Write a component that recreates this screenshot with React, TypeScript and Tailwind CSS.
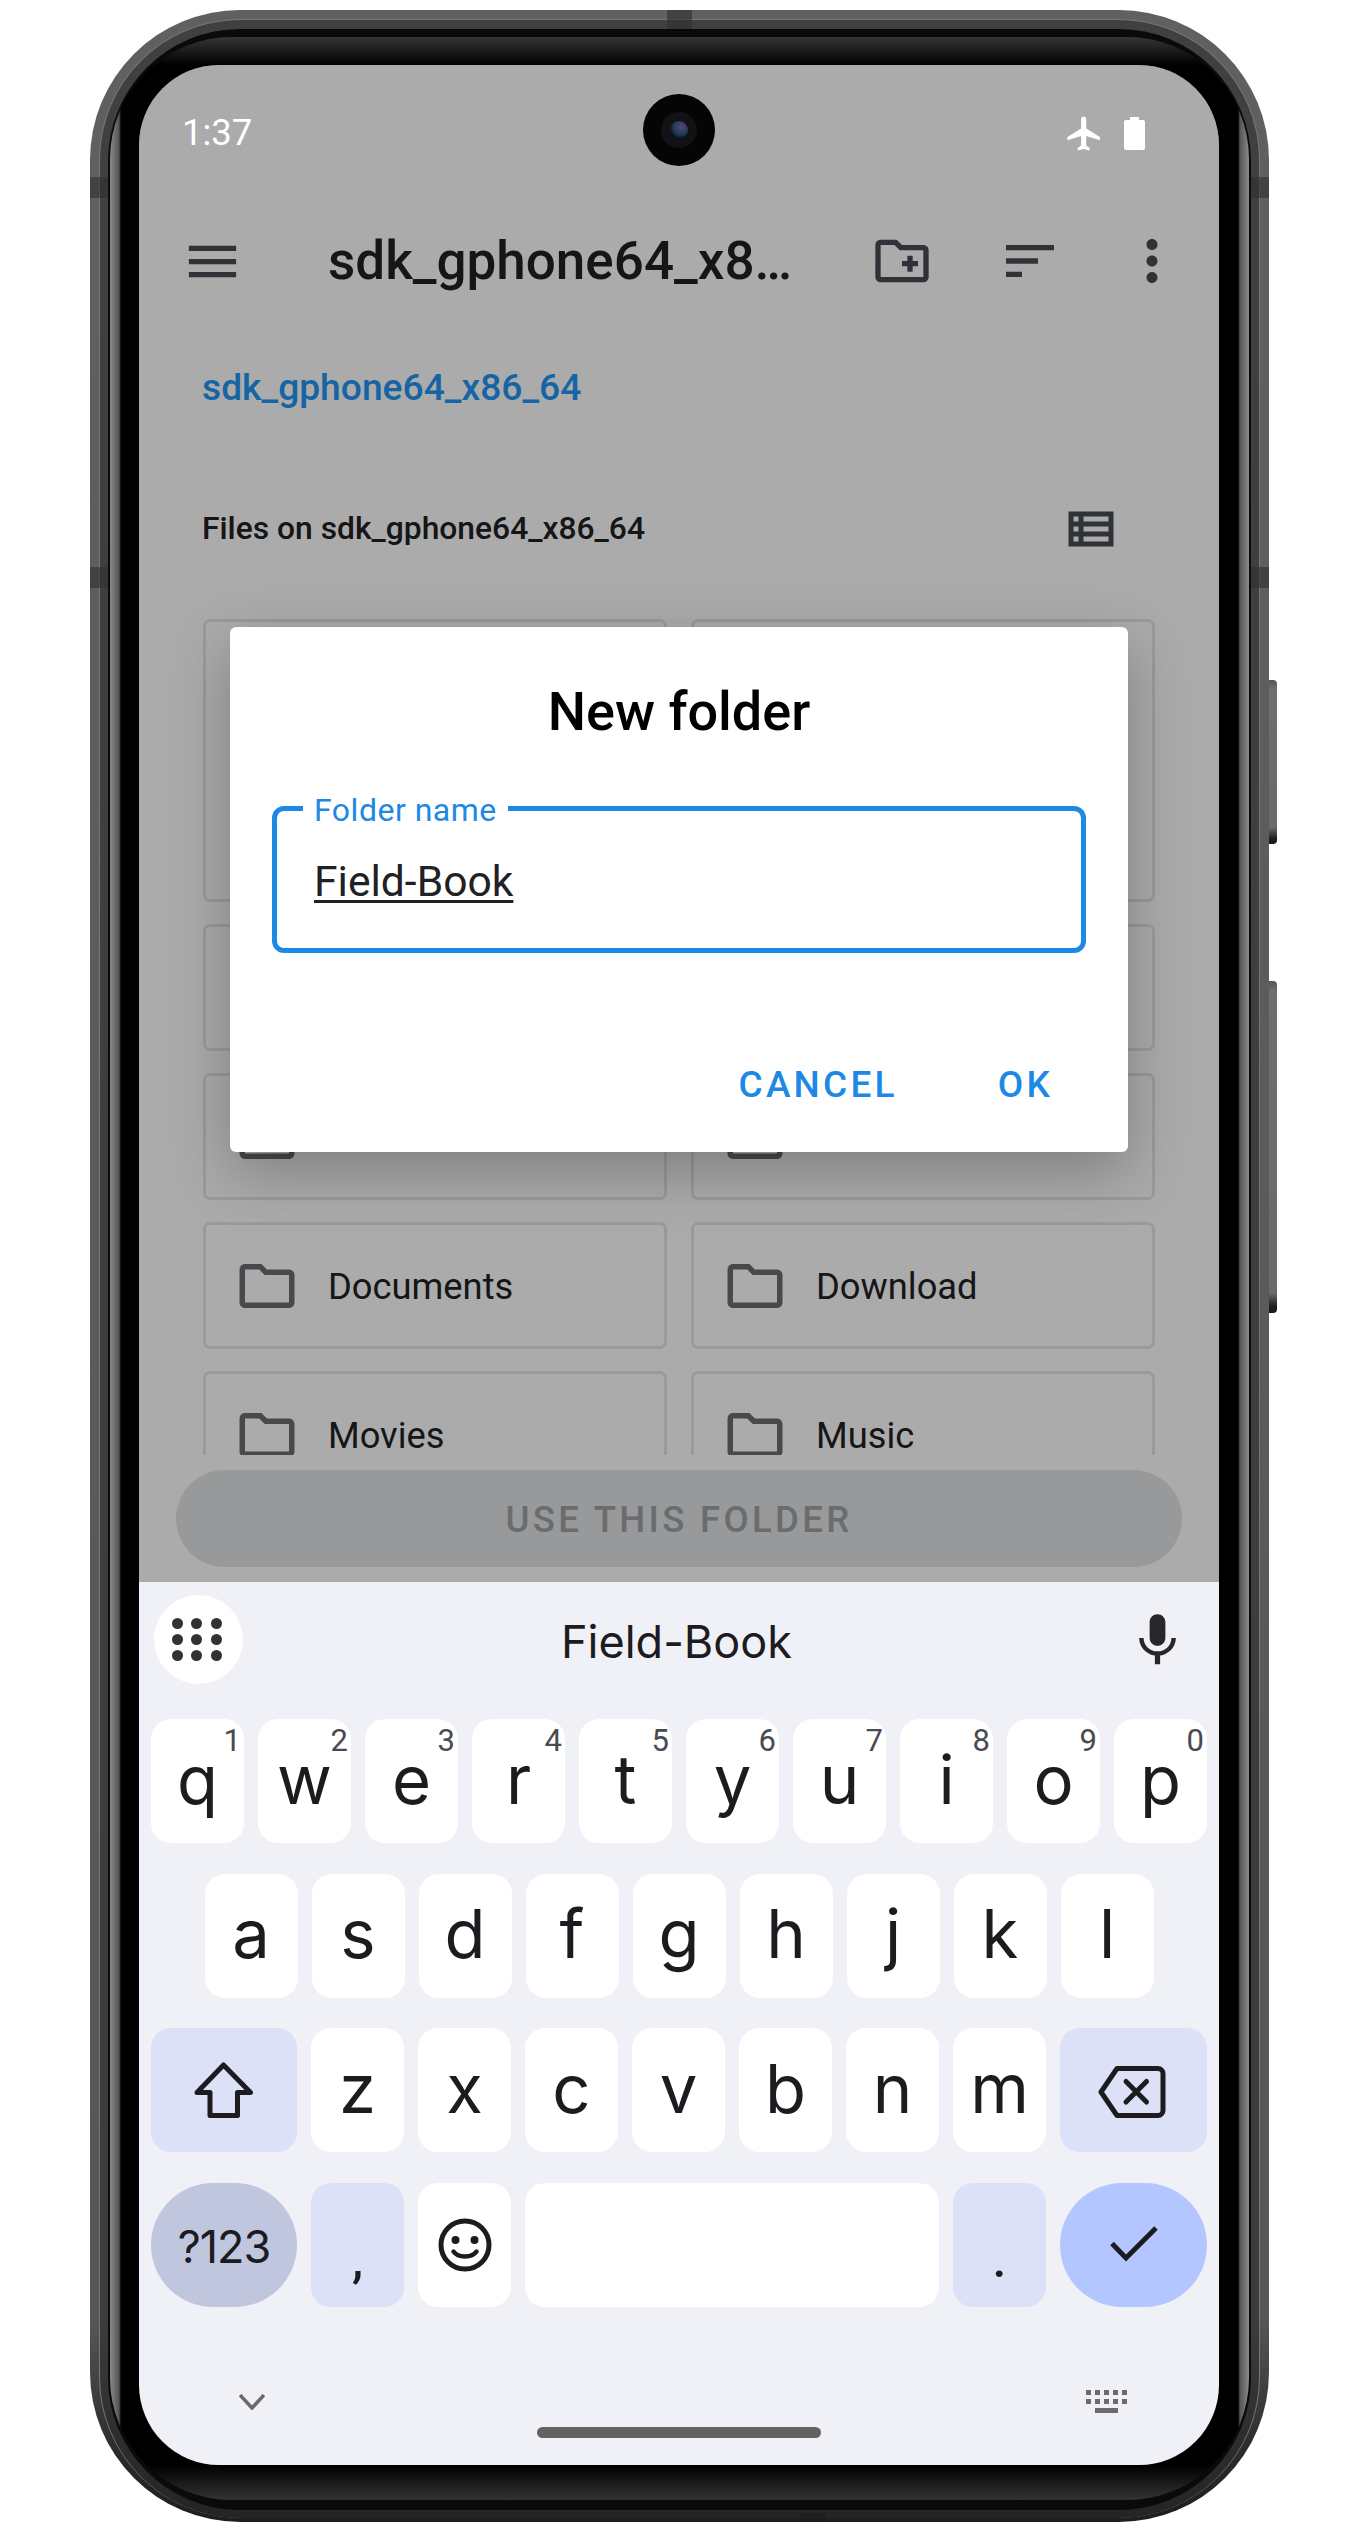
const Icon = ({ d, className }: { d: string; className: string }) => (
  <svg viewBox="0 0 24 24" className={className} fill="currentColor">
    <path d={d} />
  </svg>
);

const FOLDER =
  "M9.17 6l2 2H20v10H4V6h5.17M10 4H4c-1.1 0-1.99.9-1.99 2L2 18c0 1.1.9 2 2 2h16c1.1 0 2-.9 2-2V8c0-1.1-.9-2-2-2h-8l-2-2z";

const row1 = [
  ["q", "1"],
  ["w", "2"],
  ["e", "3"],
  ["r", "4"],
  ["t", "5"],
  ["y", "6"],
  ["u", "7"],
  ["i", "8"],
  ["o", "9"],
  ["p", "0"],
];
const row2 = ["a", "s", "d", "f", "g", "h", "j", "k", "l"];
const row3 = ["z", "x", "c", "v", "b", "n", "m"];

function Key({ label, hint }: { label: string; hint?: string }) {
  return (
    <div className="relative flex h-[124px] w-[93px] items-center justify-center rounded-[20px] bg-white pb-[4px] font-[Inter,sans-serif] text-[67px] leading-none font-normal text-[#1c1b1f]">
      {label}
      {hint && (
        <span className="absolute top-[6px] right-[3px] font-[Roboto,sans-serif] text-[31px] leading-[32px] text-[#49494f]">
          {hint}
        </span>
      )}
    </div>
  );
}

function FolderCard({ name, tall, icon }: { name?: string; tall?: boolean; icon?: boolean }) {
  return (
    <div
      className={`flex items-center rounded-[7px] border-[3px] border-[#e6e6e6] pl-[28px] ${tall ? "h-[283px]" : "h-[127px]"}`}
    >
      {icon && <Icon d={FOLDER} className="h-[66px] w-[66px] shrink-0 text-[#6c6e72]" />}
      {name && (
        <span className="ml-[28px] pt-[3px] font-[Roboto,sans-serif] text-[36.3px] leading-none text-[#202124]">
          {name}
        </span>
      )}
    </div>
  );
}

function Dialog() {
  return (
    <div className="absolute top-[562px] left-[91px] z-20 h-[525px] w-[898px] rounded-[6px] bg-white font-[Roboto,sans-serif] shadow-[0_20px_60px_rgba(0,0,0,0.26)]">
      <div className="pt-[53px] text-center text-[54px] leading-[64px] font-medium text-black">New folder</div>
      <div className="relative mx-[42px] mt-[62px] flex h-[147px] items-center rounded-[12px] border-[5px] border-[#1e88e5] pt-[3px] pl-[37px]">
        <span className="absolute top-[-21px] left-[26px] bg-white px-[11px] text-[32px] leading-[40px] tracking-[0.5px] text-[#1e88e5]">
          Folder name
        </span>
        <span className="text-[42.6px] leading-none text-[#202124] underline decoration-[3px] underline-offset-[4px]">
          Field-Book
        </span>
      </div>
      <div className="mt-[109px] flex justify-end gap-[100px] pr-[75px] text-[37px] leading-[46px] font-medium tracking-[3.2px] text-[#1e88e5]">
        <span>CANCEL</span>
        <span>OK</span>
      </div>
    </div>
  );
}

function AppScreen() {
  return (
    <div className="flex h-[1517px] flex-col bg-white font-[Roboto,sans-serif]">
      <div className="h-[136px]" />
      <div className="flex h-[120px] items-center pl-[42px] text-[#464d52]">
        <Icon d="M3 18h18v-2H3v2zm0-5h18v-2H3v2zm0-7v2h18V6H3z" className="h-[63px] w-[63px] shrink-0" />
        <span className="ml-[84px] w-[541px] shrink-0 text-[53px] leading-none font-medium text-[#202124]">
          sdk_gphone64_x8…
        </span>
        <Icon
          d="M20 6h-8l-2-2H4c-1.11 0-1.99.89-1.99 2L2 18c0 1.11.89 2 2 2h16c1.11 0 2-.89 2-2V8c0-1.11-.89-2-2-2zm0 12H4V6h5.17l2 2H20v10zm-8-4h2v2h2v-2h2v-2h-2v-2h-2v2h-2v2z"
          className="ml-[1px] h-[64px] w-[64px] shrink-0"
        />
        <Icon
          d="M3 18h6v-2H3v2zM3 6v2h18V6H3zm0 7h12v-2H3v2z"
          className="ml-[64px] h-[64px] w-[64px] shrink-0"
        />
        <Icon
          d="M12 8c1.1 0 2-.9 2-2s-.9-2-2-2-2 .9-2 2 .9 2 2 2zm0 2c-1.1 0-2 .9-2 2s.9 2 2 2 2-.9 2-2-.9-2-2-2zm0 6c-1.1 0-2 .9-2 2s.9 2 2 2 2-.9 2-2-.9-2-2-2z"
          className="ml-[57px] h-[66px] w-[66px] shrink-0"
        />
      </div>
      <div className="flex h-[134px] items-center pl-[63px] text-[37.2px] leading-none font-medium text-[#2196f3]">
        sdk_gphone64_x86_64
      </div>
      <div className="flex h-[148px] items-center justify-between pr-[98px] pl-[63px]">
        <span className="text-[31.8px] leading-none font-medium text-[#202124]">Files on sdk_gphone64_x86_64</span>
        <Icon
          d="M3 5v14h18V5H3zm4 2v2H5V7h2zm-2 6v-2h2v2H5zm0 2h2v2H5v-2zm14 2H9v-2h10v2zm0-4H9v-2h10v2zm0-4H9V7h10v2z"
          className="h-[60px] w-[60px] text-[#464d52]"
        />
      </div>
      <div className="min-h-0 flex-1 overflow-hidden pt-[16px]">
        <div className="grid grid-cols-[464px_464px] gap-x-[24px] gap-y-[22px] pl-[64px]">
          <FolderCard tall />
          <FolderCard tall />
          <FolderCard />
          <FolderCard />
          <FolderCard icon />
          <FolderCard icon />
          <FolderCard icon name="Documents" />
          <FolderCard icon name="Download" />
          <FolderCard icon name="Movies" />
          <FolderCard icon name="Music" />
        </div>
      </div>
      <div className="h-[127px] bg-white px-[37px] pt-[15px]">
        <div className="flex h-[97px] items-center justify-center rounded-full bg-[#e3e4e7] pt-[4px] text-[36.6px] font-medium tracking-[3.3px] text-[#a0a2a4]">
          USE THIS FOLDER
        </div>
      </div>
    </div>
  );
}

function StatusBar() {
  return (
    <div className="absolute top-0 left-0 z-20 flex h-[136px] w-full items-center justify-between pr-[74px] pl-[43px] font-[Roboto,sans-serif] text-white">
      <span className="text-[36.5px] leading-none">1:37</span>
      <div className="flex items-center gap-[19px]">
        <Icon
          d="M21 16v-2l-8-5V3.5c0-.83-.67-1.5-1.5-1.5S10 2.67 10 3.5V9l-8 5v2l8-2.5V19l-2 1.5V22l3.5-1 3.5 1v-1.5L13 19v-5.5l8 2.5z"
          className="h-[41px] w-[41px]"
        />
        <svg viewBox="0 0 21 33" className="h-[33px] w-[21px]" fill="currentColor">
          <path d="M6 0h9v3h4a2 2 0 0 1 2 2v26a2 2 0 0 1-2 2H2a2 2 0 0 1-2-2V5a2 2 0 0 1 2-2h4z" />
        </svg>
      </div>
    </div>
  );
}

function Keyboard() {
  return (
    <div className="flex h-[883px] flex-col bg-[#f0f0f7] font-[Inter,sans-serif] text-[#1c1b1f]">
      <div className="flex h-[137px] shrink-0 items-start pt-[13px] pr-[30px] pl-[15px]">
        <div className="grid h-[89px] w-[89px] shrink-0 grid-cols-3 content-center justify-center gap-x-[5px] gap-y-[5px] rounded-full bg-white px-[18px]">
          {Array.from({ length: 9 }).map((_, i) => (
            <span key={i} className="h-[11px] w-[11px] rounded-full bg-[#323232]" />
          ))}
        </div>
        <div className="flex h-[89px] flex-1 items-center justify-center pt-[3px] pr-[16px] text-[45px] leading-none font-normal">
          Field-Book
        </div>
        <Icon
          d="M12 14c1.66 0 3-1.34 3-3V5c0-1.66-1.34-3-3-3S9 3.34 9 5v6c0 1.66 1.34 3 3 3zm5.3-3c0 3-2.54 5.1-5.3 5.1S6.7 14 6.7 11H5c0 3.41 2.72 6.23 6 6.72V21h2v-3.28c3.28-.48 6-3.3 6-6.72h-1.7z"
          className="mt-[14px] h-[63px] w-[63px] shrink-0 text-[#26262b]"
        />
      </div>

      <div className="flex flex-col gap-[30.5px] px-[12px]">
        <div className="flex gap-[14px]">
          {row1.map(([k, h]) => (
            <Key key={k} label={k} hint={h} />
          ))}
        </div>
        <div className="flex justify-center gap-[14px]">
          {row2.map((k) => (
            <Key key={k} label={k} />
          ))}
        </div>
        <div className="flex gap-[14px]">
          <div className="flex h-[124px] w-[146px] items-center justify-center rounded-[20px] bg-[#dde1f7]">
            <svg viewBox="0 0 60 57" className="h-[57px] w-[60px]" fill="none" stroke="currentColor" strokeWidth="5" strokeLinejoin="round">
              <path d="M29.5 3 L56.5 30.5 H43.5 V53.5 H16 V30.5 H3 Z" />
            </svg>
          </div>
          {row3.map((k) => (
            <Key key={k} label={k} />
          ))}
          <div className="flex h-[124px] w-[147px] items-center justify-center rounded-[20px] bg-[#dde1f7] pt-[4px]">
            <svg viewBox="0 0 68 52" className="mr-[3px] h-[52px] w-[68px]" fill="none" stroke="currentColor" strokeWidth="5" strokeLinejoin="round" strokeLinecap="round">
              <path d="M3 26 L19 2.5 H60 a5 5 0 0 1 5 5 V44.5 a5 5 0 0 1 -5 5 H19 Z" />
              <path d="M28 15.5 L48.5 36 M48.5 15.5 L28 36" />
            </svg>
          </div>
        </div>
        <div className="flex gap-[14px]">
          <div className="flex h-[124px] w-[146px] items-center justify-center rounded-full bg-[#c0c6de] pt-[4px] text-[45px] leading-none font-normal tracking-[-1px]">
            ?123
          </div>
          <div className="flex h-[124px] w-[93px] items-end justify-center rounded-[20px] bg-[#dde1f7] pb-[22px] font-[Roboto,sans-serif] text-[50px] leading-none font-medium">
            ,
          </div>
          <div className="flex h-[124px] w-[93px] items-center justify-center rounded-[20px] bg-white">
            <svg viewBox="0 0 54 54" className="h-[54px] w-[54px]" fill="none" stroke="currentColor" strokeWidth="5">
              <circle cx="27" cy="27" r="24" />
              <circle cx="17.5" cy="22" r="4" fill="currentColor" stroke="none" />
              <circle cx="36.5" cy="22" r="4" fill="currentColor" stroke="none" />
              <path d="M15.5 33.5 C20 40 34 40 38.5 33.5" strokeWidth="4.5" strokeLinecap="round" />
            </svg>
          </div>
          <div className="h-[124px] w-[414px] rounded-[20px] bg-white" />
          <div className="flex h-[124px] w-[93px] items-end justify-center rounded-[20px] bg-[#dde1f7] pb-[22px] font-[Roboto,sans-serif] text-[50px] leading-none font-medium">
            .
          </div>
          <div className="flex h-[124px] w-[147px] items-center justify-center rounded-full bg-[#b3c6ff]">
            <svg viewBox="0 0 50 38" className="h-[38px] w-[50px]" fill="none" stroke="currentColor" strokeWidth="5">
              <path d="M3 17.5 L17 32 L47 2" />
            </svg>
          </div>
        </div>
      </div>

      <div className="mt-[87px] flex items-start justify-between pr-[92px] pl-[100px] text-[#6b6b6b]">
        <svg viewBox="0 0 26 16" className="h-[16px] w-[26px]" fill="none" stroke="currentColor" strokeWidth="3.5">
          <path d="M1 1 L13 14 L25 1" />
        </svg>
        <svg viewBox="0 0 41 23" className="mt-[-4px] h-[23px] w-[41px]" fill="currentColor">
          <path d="M0 0h5v5H0zM9 0h5v5H9zM18 0h5v5h-5zM27 0h5v5h-5zM36 0h5v5h-5zM0 9h5v5H0zM9 9h5v5H9zM18 9h5v5h-5zM27 9h5v5h-5zM36 9h5v5h-5zM9 18h23v5H9z" />
        </svg>
      </div>
      <div className="mx-auto mt-[14px] h-[11px] w-[284px] rounded-full bg-[#626262]" />
    </div>
  );
}

function Camera() {
  return (
    <div className="absolute top-[29px] left-[504px] z-20 flex h-[72px] w-[72px] items-center justify-center rounded-full bg-[#050505]">
      <div className="flex h-[36px] w-[36px] items-center justify-center rounded-full bg-[#121216]">
        <div className="h-[18px] w-[18px] rounded-full bg-[radial-gradient(circle_at_62%_32%,#5c4270,#1c3f58_45%,#05070a_78%)]" />
      </div>
    </div>
  );
}

export default function App() {
  return (
    <div className="h-[2533px] w-[1367px] overflow-hidden bg-white pt-[10px] pl-[90px]">
      <div className="relative h-[2512px] w-[1179px]">
        <div className="absolute top-[670px] left-[1174px] h-[164px] w-[13px] rounded-r-[4px] bg-[linear-gradient(to_bottom,#555_0%,#6e6e6e_6%,#6a6a6a_90%,#1c1c1c_97%)]" />
        <div className="absolute top-[971px] left-[1174px] h-[332px] w-[13px] rounded-r-[4px] bg-[linear-gradient(to_bottom,#555_0%,#6e6e6e_3%,#6a6a6a_94%,#1c1c1c_98%)]" />

        <div className="relative h-full w-full rounded-[150px] bg-[linear-gradient(to_bottom,#606060_0%,#565656_92%,#2c2c2c_97%,#1e1e1e_100%)] px-[9px] pt-[9px] pb-[4px]">
          <div className="h-full rounded-[141px] border-x border-t border-[#777] bg-[linear-gradient(to_bottom,#404040_0%,#3c3c3c_92%,#242424_100%)] px-[8px] pt-[9px] pb-[8px]">
            <div className="h-full rounded-[132px] bg-[#0a0a0a] px-[2px] pt-[8px] pb-[10px]">
              <div className="h-full rounded-[122px] bg-[linear-gradient(to_bottom,#363636_0,transparent_28px,transparent_calc(100%-35px),#333_100%),linear-gradient(to_right,#8a8a8a_0,#555_9px,#000_11px,#000_calc(100%-11px),#555_calc(100%-9px),#8a8a8a_100%)] px-[29px] pt-[28px] pb-[35px]">
                <div className="relative h-[2400px] w-[1080px] overflow-hidden rounded-[80px]">
                  <AppScreen />
                  <div className="absolute top-0 left-0 z-10 h-[1517px] w-full bg-black/[0.33]" />
                  <Camera />
                  <StatusBar />
                  <Dialog />
                  <Keyboard />
                </div>
              </div>
            </div>
          </div>
        </div>

        {/* antenna bands */}
        <div className="absolute top-0 left-[577px] h-[19px] w-[25px] bg-[#2e2e2e]/60" />
        <div className="absolute bottom-0 left-[710px] h-[9px] w-[25px] bg-[#1a1a1a]/60" />
        <div className="absolute top-[167px] left-0 h-[21px] w-[18px] bg-[#2e2e2e]/60" />
        <div className="absolute top-[557px] left-0 h-[21px] w-[18px] bg-[#2e2e2e]/60" />
        <div className="absolute top-[167px] right-0 h-[21px] w-[18px] bg-[#2e2e2e]/60" />
        <div className="absolute top-[557px] right-0 h-[21px] w-[18px] bg-[#2e2e2e]/60" />
      </div>
    </div>
  );
}
